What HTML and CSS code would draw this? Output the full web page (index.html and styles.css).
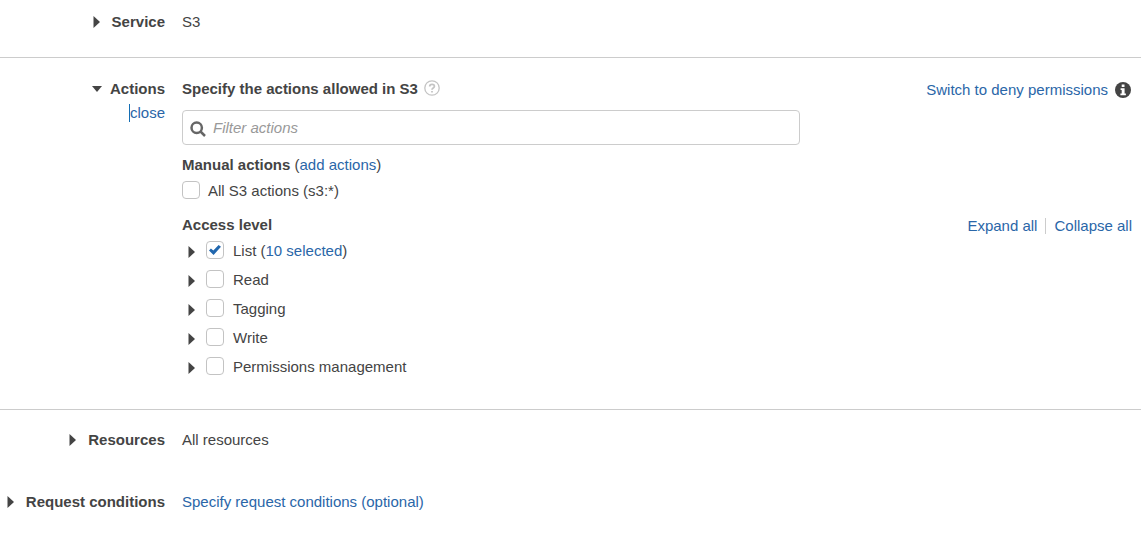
FILE: index.html
```html
<!DOCTYPE html>
<html lang="en">
<head>
<meta charset="utf-8">
<title>Policy editor</title>
<link rel="stylesheet" href="styles.css">
</head>
<body>
<main class="editor">
  <section class="row row-service">
    <div class="label">
      <button class="toggle" type="button"><svg class="caret" viewBox="0 0 7 12"><path d="M0.500 0v12L7 6z"/></svg>Service</button>
    </div>
    <div class="content">S3</div>
  </section>

  <section class="row row-actions">
    <div class="label">
      <button class="toggle toggle-open" type="button"><svg class="caret-down" viewBox="0 0 10 6"><path d="M0 0h10L5 6z"/></svg>Actions</button>
      <a class="link close" href="#">close</a>
    </div>
    <div class="content">
      <div class="bar">
        <h2 class="heading">Specify the actions allowed in S3
          <svg class="help" viewBox="0 0 16 16"><circle cx="8" cy="8" r="7.200"/><path class="mark" d="M5.700 6.600C5.700 3.700 10.400 3.700 10.400 6.300C10.400 8 8 7.900 8 9.700M8 11v1.600"/></svg>
        </h2>
        <div class="deny"><a class="link" href="#">Switch to deny permissions</a>
          <svg class="info" viewBox="0 0 16 16"><circle cx="8" cy="8" r="8"/><path d="M6.700 2.600h2.800v2.300H6.700zM5.600 6.200h4v5.200h1.300v1.800H5.400v-1.800h1.300V8H5.600z"/></svg>
        </div>
      </div>
      <div class="search">
        <svg class="magnifier" viewBox="0 0 16 16"><circle cx="6.700" cy="6.700" r="5.200"/><path d="M10.500 10.500l4.500 4.500"/></svg>
        <input class="filter" type="text" placeholder="Filter actions" aria-label="Filter actions">
      </div>
      <div class="manual"><b>Manual actions</b> (<a class="link" href="#">add actions</a>)</div>
      <label class="option option-all"><input class="check" type="checkbox">All S3 actions (s3:*)</label>
      <div class="bar bar-level">
        <h2 class="heading">Access level</h2>
        <div class="expand"><a class="link" href="#">Expand all</a><span class="divider"></span><a class="link" href="#">Collapse all</a></div>
      </div>
      <ul class="levels">
        <li class="level"><button class="toggle" type="button" aria-label="Expand List"><svg class="caret" viewBox="0 0 7 12"><path d="M0.500 0v12L7 6z"/></svg></button><input class="check" type="checkbox" id="list" checked><span><label for="list">List</label> (<a class="link" href="#">10 selected</a>)</span></li>
        <li class="level"><button class="toggle" type="button" aria-label="Expand Read"><svg class="caret" viewBox="0 0 7 12"><path d="M0.500 0v12L7 6z"/></svg></button><input class="check" type="checkbox" id="read"><label for="read">Read</label></li>
        <li class="level"><button class="toggle" type="button" aria-label="Expand Tagging"><svg class="caret" viewBox="0 0 7 12"><path d="M0.500 0v12L7 6z"/></svg></button><input class="check" type="checkbox" id="tagging"><label for="tagging">Tagging</label></li>
        <li class="level"><button class="toggle" type="button" aria-label="Expand Write"><svg class="caret" viewBox="0 0 7 12"><path d="M0.500 0v12L7 6z"/></svg></button><input class="check" type="checkbox" id="write"><label for="write">Write</label></li>
        <li class="level"><button class="toggle" type="button" aria-label="Expand Permissions management"><svg class="caret" viewBox="0 0 7 12"><path d="M0.500 0v12L7 6z"/></svg></button><input class="check" type="checkbox" id="perms"><label for="perms">Permissions management</label></li>
      </ul>
    </div>
  </section>

  <section class="row row-resources">
    <div class="label">
      <button class="toggle" type="button"><svg class="caret" viewBox="0 0 7 12"><path d="M0.500 0v12L7 6z"/></svg>Resources</button>
    </div>
    <div class="content">All resources</div>
  </section>

  <section class="row row-conditions">
    <div class="label">
      <button class="toggle" type="button"><svg class="caret" viewBox="0 0 7 12"><path d="M0.500 0v12L7 6z"/></svg>Request conditions</button>
    </div>
    <div class="content"><a class="link" href="#">Specify request conditions (optional)</a></div>
  </section>
</main>
</body>
</html>
```

FILE: styles.css
```css
* { box-sizing: border-box; }

body {
  margin: 0;
  background: #fff;
  color: #444;
  font: 15px/20px "Liberation Sans", Arial, sans-serif;
}

.row {
  display: grid;
  grid-template-columns: 165px minmax(0, 1fr);
  column-gap: 17px;
  padding-right: 9px;
}

.row-service {
  padding-top: 12px;
  padding-bottom: 25px;
  border-bottom: 1px solid #ccc;
}

.row-actions {
  padding-top: 21px;
  padding-bottom: 32px;
  border-bottom: 1px solid #ccc;
}

.row-resources { padding-top: 20px; }
.row-conditions { padding-top: 42px; }

.label {
  display: flex;
  flex-direction: column;
  align-items: flex-end;
  gap: 5px;
}

.toggle {
  display: flex;
  align-items: center;
  gap: 12px;
  padding: 0;
  border: 0;
  background: none;
  color: #444;
  font: inherit;
  font-weight: bold;
  white-space: nowrap;
}

.toggle-open { gap: 8px; }

.caret { width: 7px; height: 12px; fill: #444; }
.caret-down { width: 10px; height: 6px; fill: #444; }

.link { color: #2a66a8; text-decoration: none; }

.close { line-height: 18px; border-left: 1px solid #146eb4; }

.bar {
  display: flex;
  align-items: flex-start;
  justify-content: space-between;
}

.heading {
  display: flex;
  align-items: center;
  gap: 6px;
  margin: 0;
  font-size: 15px;
  line-height: 20px;
}

.help {
  width: 16px;
  height: 16px;
  margin-bottom: 2px;
  fill: none;
  stroke: #c4c4c4;
  stroke-width: 1.300;
}

.mark { stroke-width: 1.800; }

.deny {
  display: flex;
  align-items: center;
  gap: 7px;
  padding-top: 1px;
  padding-right: 1px;
}

.info { width: 16px; height: 16px; fill: #444; }
.info path { fill: #fff; }

.search {
  display: flex;
  align-items: center;
  gap: 7px;
  max-width: 618px;
  height: 35px;
  margin: 10px 0;
  padding: 0 7px;
  border: 1px solid #ccc;
  border-radius: 4px;
}

.magnifier {
  flex: none;
  width: 16px;
  height: 16px;
  margin-top: 2px;
  fill: none;
  stroke: #666;
  stroke-width: 2.500;
}

.filter {
  flex: 1;
  min-width: 0;
  padding: 0;
  border: 0;
  outline: 0;
  background: none;
  color: #444;
  font: inherit;
}

.filter::placeholder { color: #999; font-style: italic; opacity: 1; }

.option { display: flex; align-items: center; gap: 8px; }
.option-all { margin-top: 6px; }

.check {
  flex: none;
  appearance: none;
  width: 18px;
  height: 18px;
  margin: 0 0 2px;
  border: 1px solid #c3c3c3;
  border-radius: 4px;
  background: #fff;
}

.check:checked {
  display: grid;
  place-items: center;
}

.check:checked::before {
  content: "";
  width: 12px;
  height: 10px;
  background: #2167ae;
  clip-path: polygon(0 56%, 16% 34%, 36% 56%, 80% 0, 100% 18%, 38% 100%);
}

.bar-level { margin-top: 14px; }

.expand { display: flex; align-items: center; gap: 8px; padding-top: 1px; }
.divider { width: 1px; height: 16px; background: #ccc; }

.levels {
  display: grid;
  gap: 9px;
  margin: 5px 0 0;
  padding: 0 0 0 6px;
  list-style: none;
}

.level { display: flex; align-items: center; }
.level .toggle { padding-top: 2px; }
.level .check { margin-left: 11px; margin-right: 9px; }
```
